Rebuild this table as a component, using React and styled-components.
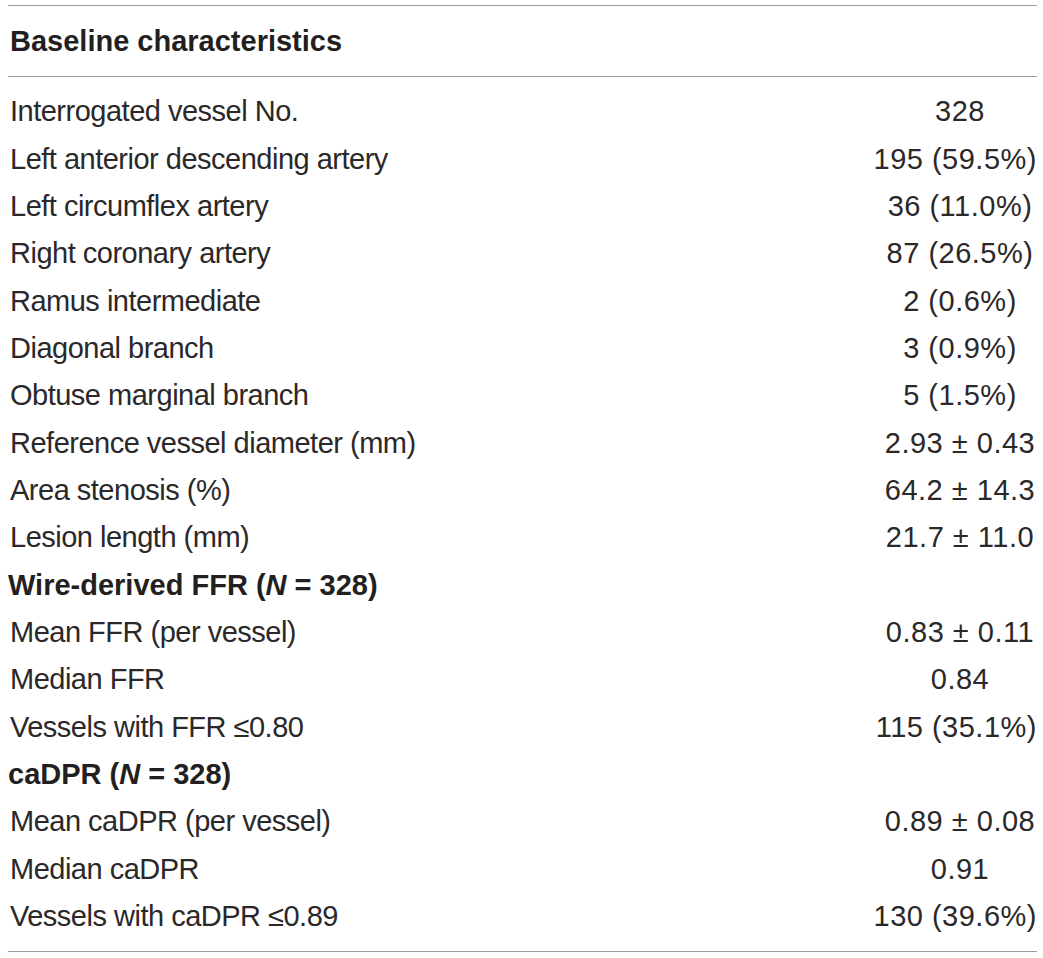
import React from "react";
import styled, { createGlobalStyle } from "styled-components";

const Global = createGlobalStyle`
  html, body { margin: 0; padding: 0; background: #ffffff; }
  body { font-family: "Liberation Sans", Arial, sans-serif; color: #231f20; }
`;

const Page = styled.div`
  padding: 5px 6px 0 8px;
  width: 1043px;
  box-sizing: border-box;
`;

const Table = styled.table`
  width: 100%;
  border-collapse: collapse;
  border-top: 1.5px solid #9b9b9b;
  border-bottom: 1.5px solid #9b9b9b;
  font-size: 29px;
`;

const HeadCell = styled.th`
  text-align: left;
  font-weight: 700;
  height: 70px;
  padding: 0 0 0 2px;
  border-bottom: 1.5px solid #9b9b9b;
  color: #231f20;
  vertical-align: middle;
`;

const Row = styled.tr`
  height: ${(p) => (p.$edge ? "58.85px" : "47.35px")};
`;

const Label = styled.td`
  padding: 0 0 0 ${(p) => (p.$bold ? "0" : "2px")};
  font-weight: ${(p) => (p.$bold ? 700 : 400)};
  letter-spacing: ${(p) => (p.$bold ? "0" : "-0.5px")};
  color: ${(p) => (p.$bold ? "#231f20" : "#2b2829")};
  white-space: nowrap;
  vertical-align: middle;
  line-height: 1;
  padding-top: ${(p) => (p.$first ? "11.5px" : "0")};
  padding-bottom: ${(p) => (p.$last ? "11.5px" : "0")};
`;

const Value = styled.td`
  width: 154px;
  white-space: nowrap;
  vertical-align: middle;
  line-height: 1;
  color: #2b2829;
  padding: 0;
  padding-top: ${(p) => (p.$first ? "11.5px" : "0")};
  padding-bottom: ${(p) => (p.$last ? "11.5px" : "0")};
`;

const ValueBox = styled.div`
  display: flex;
  justify-content: flex-end;
  width: 154px;
`;

const ValueText = styled.span`
  margin: 0 auto;
  letter-spacing: 0.5px;
  flex: none;
`;

const rows = [
  ["Interrogated vessel No.", "328"],
  ["Left anterior descending artery", "195 (59.5%)"],
  ["Left circumflex artery", "36 (11.0%)"],
  ["Right coronary artery", "87 (26.5%)"],
  ["Ramus intermediate", "2 (0.6%)"],
  ["Diagonal branch", "3 (0.9%)"],
  ["Obtuse marginal branch", "5 (1.5%)"],
  ["Reference vessel diameter (mm)", "2.93 \u00b1 0.43"],
  ["Area stenosis (%)", "64.2 \u00b1 14.3"],
  ["Lesion length (mm)", "21.7 \u00b1 11.0"],
  ["Wire-derived FFR", null, true],
  ["Mean FFR (per vessel)", "0.83 \u00b1 0.11"],
  ["Median FFR", "0.84"],
  ["Vessels with FFR \u22640.80", "115 (35.1%)"],
  ["caDPR", null, true],
  ["Mean caDPR (per vessel)", "0.89 \u00b1 0.08"],
  ["Median caDPR", "0.91"],
  ["Vessels with caDPR \u22640.89", "130 (39.6%)"],
];

export default function App() {
  return (
    <>
      <Global />
      <Page>
        <Table>
          <thead>
            <tr>
              <HeadCell colSpan={2}>Baseline characteristics</HeadCell>
            </tr>
          </thead>
          <tbody>
            {rows.map(([label, value, bold], i) => {
              const first = i === 0;
              const last = i === rows.length - 1;
              return (
                <Row key={i} $edge={first || last}>
                  <Label $bold={bold} $first={first} $last={last}>
                    {bold ? (
                      <>
                        {label} (<i>N</i> = 328)
                      </>
                    ) : (
                      label
                    )}
                  </Label>
                  <Value $first={first} $last={last}>
                    {value ? (
                      <ValueBox>
                        <ValueText>{value}</ValueText>
                      </ValueBox>
                    ) : null}
                  </Value>
                </Row>
              );
            })}
          </tbody>
        </Table>
      </Page>
    </>
  );
}
